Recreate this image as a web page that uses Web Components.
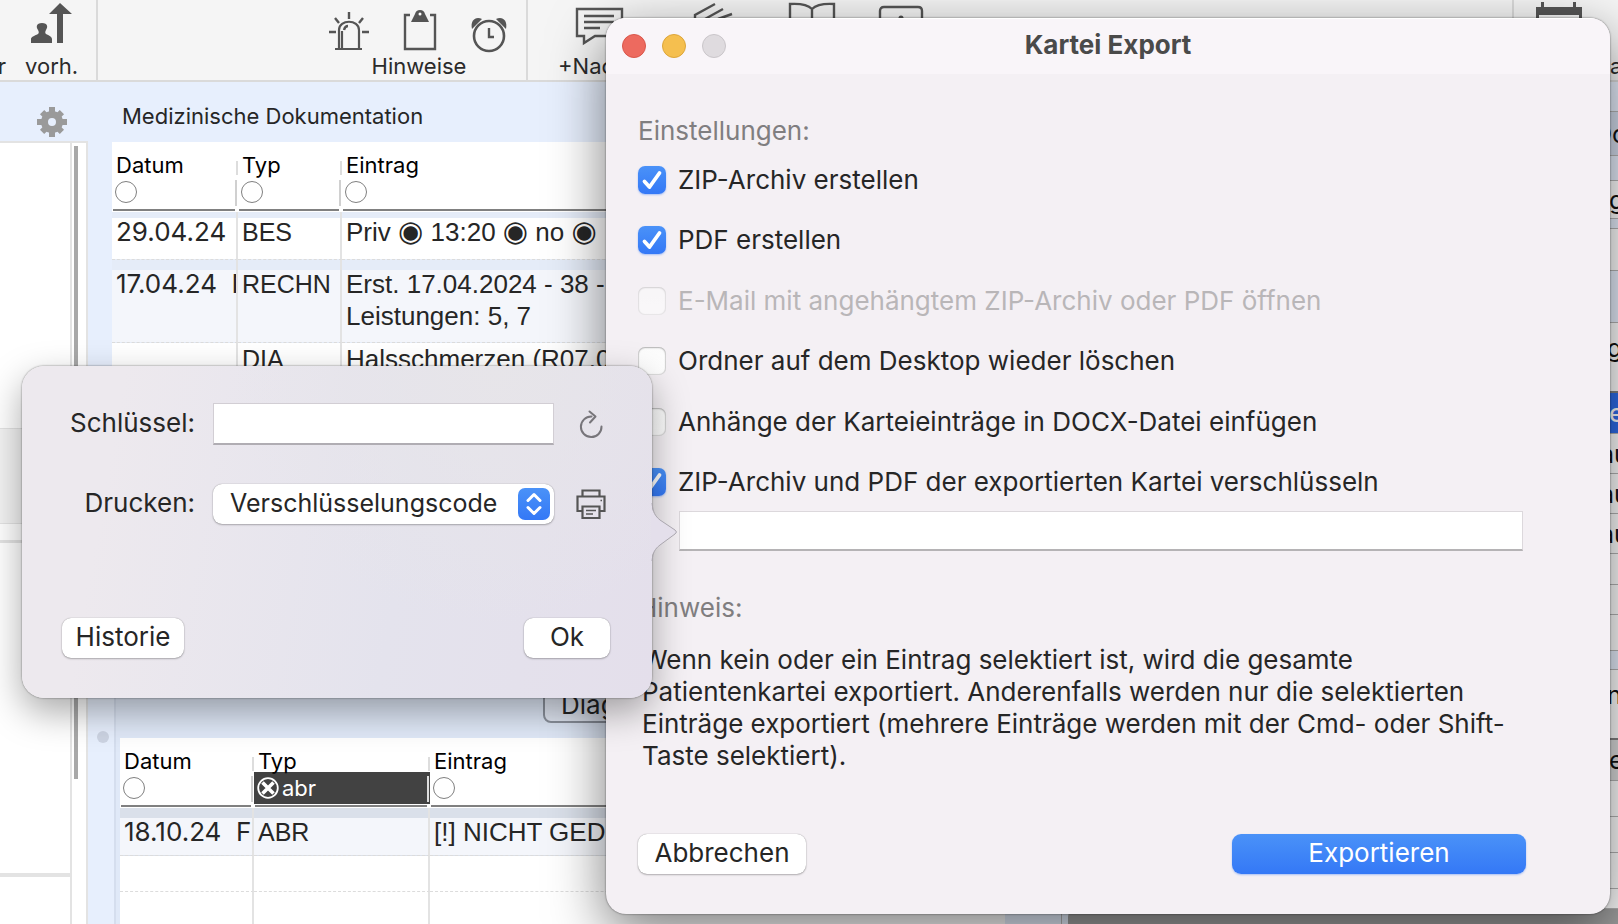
<!DOCTYPE html>
<html lang="de">
<head>
<meta charset="utf-8">
<title>Kartei Export</title>
<style>
  html, body { margin: 0; height: 100%; overflow: hidden; }
  body { font-family: Inter, "Liberation Sans", sans-serif; color: #262626; background: #e7effd; }
</style>
</head>
<body>
<kartei-app></kartei-app>

<script>
const define = (name, html, setup) => {
  const template = document.createElement('template');
  template.innerHTML = html;
  customElements.define(name, class extends HTMLElement {
    constructor() {
      super();
      this.attachShadow({ mode: 'open' }).append(template.content.cloneNode(true));
    }
    connectedCallback() {
      if (setup && !this.ready) { this.ready = true; setup(this, this.shadowRoot); }
    }
  });
};

/* ---------- toolbar ---------- */
define('tool-group', `
<style>
  :host { display: flex; flex-direction: column; align-items: center; box-sizing: border-box; height: 100%; flex: none; }
  .icons { display: flex; height: 52px; align-items: flex-start; }
  .label { font-size: 22px; line-height: 28px; white-space: nowrap; color: #2b2b2b; }
</style>
<div class="icons"><slot name="icon"></slot></div>
<div class="label"><slot></slot></div>`);

define('app-toolbar', `
<style>
  :host { display: flex; height: 80px; background: #f5f5f5; border-bottom: 2px solid #dadada; overflow: hidden; flex: none; }
  .section { display: flex; flex: none; box-sizing: border-box; border-right: 2px solid #dadada; }
  .nav { width: 98px; gap: 19px; }
  .nav tool-group:first-child { width: 10px; align-items: flex-end; margin-left: -4px; }
  .notes { width: 430px; justify-content: flex-end; padding-right: 16px; }
  .actions { flex: 1; justify-content: flex-start; padding-left: 30px; }
  .last { border: 0; width: 104px; justify-content: space-between; padding-left: 21px; }
  .crop { width: 8px; overflow: hidden; align-items: flex-start; }
  svg { display: block; fill: none; stroke: #555; stroke-width: 2.4; }
  .solid { fill: #555; stroke: none; }
</style>
<div class="section nav">
  <tool-group>r</tool-group>
  <tool-group>
    <svg slot="icon" width="52" height="50" viewBox="0 0 52 50"><path class="solid" d="M34 3 46 14H37V43H31V14H23ZM5 43V39C5 37 8 36 12 34 13 33 13 32 12 30 10 27 10 23 16 23S22 27 20 30C19 32 19 33 20 34 24 36 26 37 26 39V43Z"/></svg>
    vorh.
  </tool-group>
</div>
<div class="section notes">
  <tool-group>
    <svg slot="icon" width="182" height="54" viewBox="0 0 182 54">
      <path d="M11 48V30C11 19 31 19 31 30V48M7 49H34M14 48V31" stroke-width="2.2"/><path d="M16 30Q17 26 20 26M21 12V19M7 18 11 23M35 18 31 23M1 32H8M34 32H41"/>
      <path d="M82 15H77V49H107V15H102"/><path class="solid" d="M83 22 87 14Q88 10 92 10T97 14L101 22Z"/><circle cx="92" cy="14" r="1.5" fill="#fff" stroke="none"/>
      <circle cx="161" cy="36" r="15" stroke-width="2.6"/><path d="M161 28V37H166"/>
      <path class="solid" d="M144 29C142 20 148 16 154 19ZM178 29C180 20 174 16 168 19Z"/>
    </svg>
    Hinweise
  </tool-group>
</div>
<div class="section actions">
  <tool-group>
    <svg slot="icon" width="400" height="50" viewBox="0 0 400 50">
      <path d="M19 9H64V36H37L26 43V36H19ZM26 16H56M26 22H56M26 28H42"/>
      <path d="M137 20V15L157 4M147 19 165 9M160 19 174 14"/>
      <path d="M232 22V4Q248 3 254 9 260 3 276 4V22M254 9V22"/>
      <path d="M322 22V11Q322 7 326 7H360Q364 7 364 11V22"/><circle class="solid" cx="343" cy="18" r="2.5"/>
    </svg>
    <span style="display:block;width:400px">+Nac</span>
  </tool-group>
</div>
<div class="section last">
  <tool-group><svg slot="icon" width="48" height="24" viewBox="0 0 48 24"><path class="solid" d="M1 7H6V2H9V7H38V2H41V7H47V22H44V15H4V22H1Z"/></svg></tool-group>
  <tool-group class="crop">a</tool-group>
</div>`);

/* ---------- left list ---------- */
define('side-list', `
<style>
  :host { display: flex; flex-direction: column; width: 88px; flex: none; }
  header { height: 59px; box-sizing: border-box; padding: 25px 0 0 37px; }
  button { border: 0; padding: 0; background: none; display: block; }
  svg { display: block; }
  .panel { flex: 1; display: flex; border-top: 2px solid #e3e3e3; background: #fff; }
  .list { flex: 1; border-right: 2px solid #e3e3e3; }
  .first { height: 285px; }
  .second { height: 94px; background: #f3f3f3; border: 1px solid #e3e3e3; border-width: 1px 0; }
  .third { height: 16px; border-bottom: 3px solid #e3e3e3; }
  .fourth { height: 330px; border-bottom: 4px solid #e3e3e3; }
  .track { border-right: 2px solid #e3e3e3; box-sizing: border-box; width: 16px; padding: 3px 0 0 2px; }
  .thumb { width: 4px; height: 633px; background: #a8a8a8; }
</style>
<header><button aria-label="Einstellungen"><svg width="30" height="30" viewBox="-15 -15 30 30"><g fill="#9a9a9a">
  <path fill-rule="evenodd" d="M0-11A11 11 0 1 1 0 11A11 11 0 1 1 0-11ZM0-4A4 4 0 1 0 0 4A4 4 0 1 0 0-4Z"/>
  <path d="M-3-15H3L3-9H-3ZM-3 15H3V9H-3ZM-15-3V3H-9V-3ZM15-3V3H9V-3Z"/>
  <path transform="rotate(45)" d="M-3-14H3L3-9H-3ZM-3 14H3V9H-3ZM-14-3V3H-9V-3ZM14-3V3H9V-3Z"/></g></svg></button></header>
<div class="panel">
  <div class="list"><div class="first"></div><div class="second"></div><div class="third"></div><div class="fourth"></div></div>
  <div class="track"><div class="thumb"></div></div>
</div>`);

/* ---------- record table ---------- */
define('record-table', `
<style>
  :host { display: block; background: #fff; overflow: hidden; }
  table { width: 100%; table-layout: fixed; border-collapse: separate; border-spacing: 0; }
  th { height: 70px; padding: 0; text-align: left; vertical-align: top; font-weight: 400; font-size: 22px; color: #000;
    background: linear-gradient(#ddd,#ddd) right 0 top 19px/2px 14px no-repeat,
      linear-gradient(#d0d0d0,#d0d0d0) right 1px top 38px/2px 26px no-repeat,
      linear-gradient(#808080,#808080) 1px 67px/calc(100% - 4px) 2px no-repeat; }
  .name { display: block; line-height: 28px; padding: 9px 4px 0; height: 25px; }
  .filter { display: flex; align-items: center; height: 32px; padding: 0 3px; gap: 3px; }
  .filter button { width: 22px; height: 22px; border: 1px solid #808080; border-radius: 50%; background: #fff; padding: 0; flex: none; box-sizing: border-box; }
  .filter.on { background: #424242 linear-gradient(#ddd,#ddd) right 1px top 4px/2px 26px no-repeat; color: #fff; }
  .filter.on button { border: 0; background: none; }
  .filter svg { display: block; }
  td { box-sizing: border-box; padding: 0 4px; vertical-align: top; font: 26px/32px "Liberation Sans", Arial, sans-serif; white-space: pre; overflow: hidden;
    border-right: 2px solid #e3e3e3; border-bottom: 1px dashed #dcdcdc;
    background: linear-gradient(var(--strip-color) var(--strip), var(--fill) 0); }
  td:first-child { font-family: Inter, sans-serif; }
  td:nth-child(2) { font-size: 25px; }
  th:last-child, td:last-child { border-right: 0; }
  i { font: 29px/26px "DejaVu Sans", sans-serif; }
</style>
<table><colgroup></colgroup><thead><tr></tr></thead><tbody></tbody></table>`,
(host, root) => {
  const data = tables[host.getAttribute('source')];
  root.querySelector('colgroup').innerHTML = data.widths.map(w => `<col${w ? ` style="width:${w}px"` : ''}>`).join('');
  root.querySelector('thead tr').innerHTML = ['Datum', 'Typ', 'Eintrag'].map((name, i) => `<th><span class="name">${name}</span>` +
    (data.filter && i === 1
      ? `<div class="filter on"><button aria-label="Filter löschen"><svg width="22" height="22" viewBox="0 0 22 22" fill="none" stroke="#fff"><circle cx="11" cy="11" r="9.8" stroke-width="1.8"/><path d="M5.500 5.500 16.500 16.500M16.500 5.500 5.500 16.500" stroke-width="3.600"/></svg></button><span>${data.filter}</span></div>`
      : `<div class="filter"><button aria-label="${name} filtern"></button></div>`) + '</th>').join('');
  root.querySelector('tbody').innerHTML = data.rows.map(r =>
    `<tr style="--strip:${r.strip || 0}px;--strip-color:${r.color || '#fff'};--fill:${r.fill || '#fff'}">` +
    r.cells.map(c => `<td style="height:${r.height}px;padding-top:${r.pad || 0}px">${c}</td>`).join('') + '</tr>').join('');
});

const tables = {
  doku: { widths: [126, 104, 0], rows: [
    { height: 48, strip: 6, color: '#e5ecf8', pad: 4, cells: ['29.04.24', 'BES', 'Priv <i>◉</i> 13:20 <i>◉</i> no <i>◉</i>'] },
    { height: 83, strip: 10, color: '#e5ecf8', fill: '#f4f6fb', pad: 8, cells: ['17.04.24  N', 'RECHN', 'Erst. 17.04.2024 - 38 -\nLeistungen: 5, 7'] },
    { height: 60, cells: ['', 'DIA', 'Halsschmerzen (R07.0'] },
  ] },
  abr: { widths: [134, 176, 0], filter: 'abr', rows: [
    { height: 48, strip: 10, color: '#dae0ea', fill: '#f4f6fb', pad: 8, cells: ['18.10.24  F', 'ABR', '[!] NICHT GED'] },
    { height: 36, cells: ['', '', ''] },
    { height: 36, cells: ['', '', ''] },
  ] },
};

/* ---------- centre ---------- */
define('doc-area', `
<style>
  :host { display: flex; flex: 1; min-width: 0; }
  .split { width: 24px; flex: none; display: flex; flex-direction: column; align-items: center; justify-content: flex-end; padding-left: 5px; box-sizing: border-box; }
  .grip { width: 12px; height: 12px; border-radius: 50%; background: #cdd4e3; margin-bottom: 181px; }
  .main { flex: 1; min-width: 0; display: flex; flex-direction: column; }
  h2 { margin: 0; font-size: 22px; font-weight: 400; line-height: 32px; height: 60px; box-sizing: border-box; padding: 18px 10px 0; flex: none; }
  .upper { flex: 1; min-height: 0; }
  .lower { flex: none; border-left: 2px solid #d5deee; margin-left: 2px; padding-left: 4px; background: #e0e9f8; }
  .bar { height: 58px; display: flex; align-items: flex-start; padding: 3px 0 0 423px; box-sizing: border-box; }
  .bar button { font: 26px/32px Inter, sans-serif; color: #262626; height: 40px; padding: 3px 16px 0; border: 2px solid #8d939e; border-radius: 8px; background: #e4eaf6; }
  .lower record-table { height: 186px; }
</style>
<div class="split"><div class="grip"></div></div>
<div class="main">
  <h2>Medizinische Dokumentation</h2>
  <record-table class="upper" source="doku"></record-table>
  <div class="lower"><div class="bar"><button>Diag</button></div><record-table source="abr"></record-table></div>
</div>`);

/* ---------- right panel ---------- */
define('side-rows', `
<style>
  :host { display: block; flex: none; width: 557px; margin-left: 56px; border-left: 1px solid #b5b5b5; box-sizing: border-box; overflow: hidden; }
  div { display: flex; justify-content: flex-end; align-items: center; box-sizing: border-box; border-bottom: 1px solid #b4b4b4; background: #fff; font-size: 25px; color: #111; }
  span { width: 24px; box-sizing: border-box; overflow: hidden; flex: none; line-height: 32px; }
  .mid { padding-left: 6px; } .end { padding-left: 15px; }
  .head { padding-bottom: 18px; border-bottom: 2px solid #808080; } .head .end { padding-left: 13px; }
  .blue { background: #e7effd; } .bar { background: #d3dcec; }
  .sel { background: #2e6cea; color: #fff; font-weight: 500; } .gray { background: #dcdcdc; }
  .scroll { height: 20px; background: #a0a0a0; border: 0; border-radius: 8px 0 0 0; margin-left: 6px; }
</style>`, (host, root) => {
  const rows = [[30, 'blue'], [44, 'bar', 'Do', ''], [25, 'blue'], [38, '', 'g', 'end'], [10, 'blue'], [42, ''], [52, 'blue'],
    [70, 'head', 'g', 'end'], [41, 'sel', 'e', 'end'], [40, '', 'au', 'mid'], [40, '', 'au', 'mid'], [40, '', 'au', 'mid'],
    [31, ''], [30, ''], [36, ''], [19, 'blue'], [70, 'head', 'n', 'end'], [41, 'gray', 'e', 'end'], [36, ''], [36, ''], [36, ''], [20, '']];
  root.innerHTML += rows.map(([h, kind, text, pos]) => `<div class="${kind}" style="height:${h}px">${text ? `<span class="${pos}">${text}</span>` : ''}</div>`).join('') + '<div class="scroll"></div>';
});

/* ---------- controls ---------- */
define('mac-button', `
<style>
  :host { display: block; }
  button { display: block; width: 100%; height: 40px; border: 0; border-radius: 9px; padding: 0 0 2px; background: #fff; color: #262626;
    font: 26px/38px Inter, sans-serif; box-shadow: 0 0 1px rgba(0,0,0,.4), 0 1px 2px rgba(0,0,0,.25); }
  :host([primary]) button { color: #fff; background: linear-gradient(#4a92f8, #3478f6); box-shadow: 0 1px 2px rgba(52,120,246,.4); }
</style>
<button><slot></slot></button>`);

define('mac-check', `
<style>
  :host { display: block; }
  label { display: flex; align-items: center; gap: 12px; height: 28px; font-size: 26px; white-space: nowrap; color: #262626; }
  .box { display: grid; width: 28px; height: 28px; flex: none; }
  input, svg { grid-area: 1 / 1; margin: 0; width: 28px; height: 28px; }
  input { appearance: none; border-radius: 7px; background: linear-gradient(#fcfcfc, #fff); box-shadow: inset 0 0 1px 1px rgba(0,0,0,.14), inset 0 1px 2px rgba(0,0,0,.18); }
  input:checked { background: linear-gradient(#4a92f8, #3478f6); box-shadow: 0 1px 2px rgba(52,120,246,.4); }
  svg { display: none; pointer-events: none; }
  input:checked + svg { display: block; }
  :host([disabled]) label { color: #b9b6b8; }
  :host([disabled]) input { opacity: .5; }
</style>
<label><span class="box"><input type="checkbox"><svg viewBox="0 0 28 28" fill="none" stroke="#fff" stroke-width="3.800" stroke-linecap="round" stroke-linejoin="round"><path d="M6.500 15.500 11.500 21 21.500 7"/></svg></span><slot></slot></label>`,
(host, root) => {
  const input = root.querySelector('input');
  input.checked = host.hasAttribute('checked');
  input.disabled = host.hasAttribute('disabled');
});

/* ---------- export window ---------- */
define('export-window', `
<style>
  :host { display: flex; flex-direction: column; border-radius: 20px; background: #f4f0f4; overflow: hidden;
    box-shadow: 0 0 2px rgba(0,0,0,.6), 0 18px 56px rgba(0,0,0,.52); }
  header { display: grid; grid-template-columns: 1fr auto 1fr; align-items: center; height: 56px; background: #f9f5f9; box-shadow: inset 0 1px #fff; flex: none; }
  .lights { display: flex; gap: 16px; padding-left: 16px; }
  .lights button { width: 24px; height: 24px; border-radius: 50%; border: 1px solid #d9564b; background: #ed6a5f; padding: 0; }
  .lights .min { background: #f5bf4f; border-color: #dca53a; } .lights .max { background: #dfdbdf; border-color: #c9c5c9; }
  h1 { margin: 0; font-size: 26px; font-weight: 700; line-height: 32px; color: #4a4a4a; padding-bottom: 2px; }
  main { flex: 1; display: flex; flex-direction: column; padding: 41px 84px 40px 32px; font-size: 26px; line-height: 32px; }
  .muted { color: #807e80; margin: 0; }
  .checks { margin: 19px 0 15px; display: grid; gap: 32px; }
  .checks mac-check:nth-child(odd):not(:first-child) { padding-top: 1px; }
  .key { height: 40px; margin: 0 3px 41px 41px; box-sizing: border-box; border: 1px solid #dcd8dc; border-bottom: 2px solid #b5b3b5; background: #fff; font: 26px Inter, sans-serif; border-radius: 0; padding: 0 6px; }
  .text { margin: 20px 0 0 4px; white-space: nowrap; }
  footer { display: flex; justify-content: space-between; margin-top: auto; }
  .cancel { width: 168px; } .export { width: 294px; }
</style>
<header><div class="lights"><button aria-label="Schließen"></button><button class="min" aria-label="Minimieren"></button><button class="max" aria-label="Zoomen" disabled></button></div><h1>Kartei Export</h1></header>
<main>
  <p class="muted">Einstellungen:</p>
  <div class="checks">
    <mac-check checked>ZIP-Archiv erstellen</mac-check>
    <mac-check checked>PDF erstellen</mac-check>
    <mac-check disabled>E-Mail mit angehängtem ZIP-Archiv oder PDF öffnen</mac-check>
    <mac-check>Ordner auf dem Desktop wieder löschen</mac-check>
    <mac-check>Anhänge der Karteieinträge in DOCX-Datei einfügen</mac-check>
    <mac-check checked>ZIP-Archiv und PDF der exportierten Kartei verschlüsseln</mac-check>
  </div>
  <input class="key" type="text" aria-label="Verschlüsselungscode">
  <p class="muted">Hinweis:</p>
  <p class="text">Wenn kein oder ein Eintrag selektiert ist, wird die gesamte<br>Patientenkartei exportiert. Anderenfalls werden nur die selektierten<br>Einträge exportiert (mehrere Einträge werden mit der Cmd- oder Shift-<br>Taste selektiert).</p>
  <footer><mac-button class="cancel">Abbrechen</mac-button><mac-button class="export" primary>Exportieren</mac-button></footer>
</main>`);

/* ---------- key popover ---------- */
define('key-popover', `
<style>
  :host { display: flex; flex-direction: column; justify-content: space-between; box-sizing: border-box; padding: 37px 42px 40px 40px; border-radius: 22px;
    background: radial-gradient(circle at 75% 0, #e7e5e9, transparent 45%), linear-gradient(100deg, #ede9ee 15%, #e4e3ed 60%, #e4dfeb);
    box-shadow: 0 0 2px rgba(0,0,0,.55), 0 14px 36px rgba(0,0,0,.34); }
  .arrow { position: absolute; left: calc(100% - 1px); top: 136px; display: block; }
  .form { display: grid; grid-template-columns: 133px 341px 38px; column-gap: 18px; row-gap: 39px; align-items: center; }
  label { text-align: right; font-size: 26px; line-height: 32px; padding-bottom: 3px; }
  input { height: 42px; width: 100%; box-sizing: border-box; border: 1px solid #d2ced4; border-bottom: 2px solid #b0adb3; background: #fff; border-radius: 0; font: 26px Inter, sans-serif; }
  .pick { display: grid; height: 40px; }
  select { grid-area: 1 / 1; appearance: none; width: 100%; height: 40px; border: 0; border-radius: 9px; background: #fff; padding: 0 0 2px 17px; font: 25px/36px Inter, sans-serif; color: #262626;
    box-shadow: 0 0 1px rgba(0,0,0,.4), 0 1px 2px rgba(0,0,0,.25); }
  .pick svg { grid-area: 1 / 1; justify-self: end; align-self: center; margin-right: 4px; pointer-events: none; }
  .icon { border: 0; padding: 0; background: none; display: grid; place-items: center; }
  svg { display: block; }
  footer { display: flex; justify-content: space-between; }
  .history { width: 122px; } .ok { width: 86px; }
</style>
<svg class="arrow" width="28" height="60" viewBox="0 0 28 60"><path d="M0 1C1 10 4 14 9 18L24 28Q27 30 24 32L9 43C4 47 1 50 0 59Z" fill="#e4dfeb"/><path d="M1 1C2 10 4 14 9 18L24 28Q27 30 24 32L9 43C4 47 2 50 1 59" fill="none" stroke="#aaa6ae"/></svg>
<div class="form">
  <label for="k">Schlüssel:</label><input id="k" type="text">
  <button class="icon" aria-label="Neu erzeugen"><svg width="30" height="32" viewBox="0 0 30 32" fill="none" stroke="#77757a" stroke-width="2"><path d="M15.500 8.500A10.300 10.300 0 1 0 25.500 18.500M13.500 3.500 19.500 8.500 14 14.500" stroke-linecap="round" stroke-linejoin="round"/></svg></button>
  <label for="p">Drucken:</label>
  <span class="pick"><select id="p"><option>Verschlüsselungscode</option></select>
    <svg width="32" height="32" viewBox="0 0 32 32"><defs><linearGradient id="g" x2="0" y2="1"><stop stop-color="#4a92f8"/><stop offset="1" stop-color="#3478f6"/></linearGradient></defs><rect width="32" height="32" rx="7" fill="url(#g)"/><path d="M10 12.500 16 6.500 22 12.500M10 19.500 16 25.500 22 19.500" fill="none" stroke="#fff" stroke-width="3" stroke-linecap="round" stroke-linejoin="round"/></svg></span>
  <button class="icon" aria-label="Drucken"><svg width="30" height="32" viewBox="0 0 30 32" fill="none" stroke="#555" stroke-width="2.200"><path d="M6.500 8V2.500H23.500V8M6 23H1.500V8.500H28.500V23H24M6.500 18.500H23.500V30H6.500Z"/><path d="M10 22.500H20M10 26H17M24.500 12.500H26" stroke-width="1.400"/></svg></button>
</div>
<footer><mac-button class="history">Historie</mac-button><mac-button class="ok">Ok</mac-button></footer>`);

/* ---------- shell ---------- */
define('kartei-app', `
<style>
  :host { display: flex; flex-direction: column; height: 100vh; position: relative; overflow: hidden; background: #e7effd; }
  .work { flex: 1; min-height: 0; display: flex; }
  export-window { position: absolute; left: 606px; right: 8px; top: 18px; bottom: 10px; }
  key-popover { position: absolute; left: 22px; top: 366px; width: 630px; height: 332px; }
</style>
<app-toolbar></app-toolbar>
<div class="work"><side-list></side-list><doc-area></doc-area><side-rows></side-rows></div>
<export-window></export-window>
<key-popover></key-popover>`);
</script>
</body>
</html>
